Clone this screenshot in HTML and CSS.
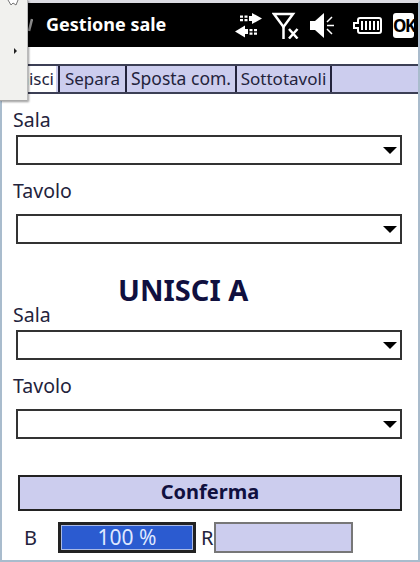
FILE: index.html
```html
<!DOCTYPE html>
<html lang="it">
<head>
  <meta charset="UTF-8">
  <meta name="viewport" content="width=device-width, initial-scale=1.0">
  <title>Gestione sale</title>
  <link rel="stylesheet" href="styles.css">
</head>
<body>

<div class="screen">
  <header class="titlebar">
    <svg class="ico-flag" width="5" height="14" viewBox="0 0 5 14">
      <path d="M4 1L1 13" stroke="#8a8a8a" stroke-width="2.5"/>
    </svg>
    <span class="title">Gestione sale</span>
    <div class="tray">
      <svg class="ico-sync" width="28" height="25" viewBox="0 0 28 25">
        <path d="M17 0l10 5.500-10 5.500V8h-3V3h3z" fill="#fff"/>
        <path d="M5 2.500h3v2.200H5zM5 6h3v2.200H5zM9.500 2.500h3v2.200h-3zM9.500 6h3v2.200h-3z" fill="#fff"/>
        <path d="M10 12.500L0 18.500l10 6v-3.500h3v-5h-3z" fill="#fff"/>
        <path d="M14.500 16h3v2.200h-3zM14.500 19.500h3v2.200h-3zM19 16h3v2.200h-3zM19 19.500h3v2.200h-3z" fill="#fff"/>
      </svg>
      <svg class="ico-signal" width="27" height="27" viewBox="0 0 27 27">
        <path d="M2 2h19L11.500 15z" fill="none" stroke="#fff" stroke-width="2.500"/>
        <path d="M11.500 14v13" stroke="#fff" stroke-width="2.500"/>
        <path d="M17 17l8.500 9.500M25.500 17l-8.500 9.500" stroke="#fff" stroke-width="2.500"/>
      </svg>
      <svg class="ico-sound" width="25" height="25" viewBox="0 0 25 25">
        <path d="M0 8h5l9-8v25l-9-8H0z" fill="#fff"/>
        <path d="M17 9l5-5M17 12.500h7M17 16l5 5" stroke="#fff" stroke-width="1.500"/>
      </svg>
      <svg class="ico-battery" width="29" height="17" viewBox="0 0 29 17">
        <path d="M7 1h19a2 2 0 0 1 2 2v11a2 2 0 0 1-2 2H7a2 2 0 0 1-2-2v-3H1V6h4V3a2 2 0 0 1 2-2z" fill="none" stroke="#fff" stroke-width="2"/>
        <path d="M9 4v9M13 4v9M17 4v9M21 4v9M25 4v9" stroke="#fff" stroke-width="2"/>
      </svg>
      <span class="ok">OK</span>
    </div>
  </header>

  <nav class="tabs">
    <span class="tab tab-active">Unisci</span>
    <span class="tab tab-separa">Separa</span>
    <span class="tab tab-sposta">Sposta com.</span>
    <span class="tab tab-sotto">Sottotavoli</span>
  </nav>

  <main class="content">
    <div class="field">
      <label class="lbl">Sala</label>
      <div class="combo"><span class="arrow"></span></div>
    </div>
    <div class="field">
      <label class="lbl">Tavolo</label>
      <div class="combo combo-low"><span class="arrow"></span></div>
    </div>

    <h2 class="heading">UNISCI A</h2>

    <div class="field field-tight">
      <label class="lbl">Sala</label>
      <div class="combo"><span class="arrow"></span></div>
    </div>
    <div class="field">
      <label class="lbl">Tavolo</label>
      <div class="combo combo-low"><span class="arrow"></span></div>
    </div>

    <button class="confirm" type="button">Conferma</button>

    <div class="status">
      <span class="status-b">B</span>
      <div class="progress">100 %</div>
      <span class="status-r">R</span>
      <div class="rbox"></div>
    </div>
  </main>
</div>

<div class="popup"><span class="popup-arrow"></span></div>
<svg class="cursor" width="12" height="6" viewBox="0 0 12 6">
  <path d="M1 0l3 5 2-2 3 2 2-5" fill="#fff" stroke="#777" stroke-width="1"/>
</svg>

</body>
</html>
```

FILE: styles.css
```css
* {
  box-sizing: border-box;
}

body {
  margin: 0;
  background-color: #fff;
  font-family: "Noto Sans", sans-serif;
  color: #23233c;
}

.screen {
  width: 420px;
  height: 562px;
  display: flex;
  flex-direction: column;
  background-color: #fff;
  border-top: 3px solid #dcdce2;
  border-left: 2px solid #a9bccd;
  border-right: 2px solid #a9bccd;
  border-bottom: 2px solid #a9bccd;
}

.titlebar {
  height: 44px;
  flex-shrink: 0;
  background-color: #000;
  color: #fff;
  display: flex;
  align-items: center;
  padding: 0 4px 0 26px;
}

.ico-flag {
  margin-right: 13px;
}

.title {
  font-weight: bold;
  font-size: 18px;
  padding-bottom: 3px;
}

.tray {
  margin-left: auto;
  display: flex;
  align-items: center;
}

.ico-sync {
  margin-right: 9px;
}

.ico-signal {
  margin-right: 11px;
}

.ico-sound {
  margin-right: 18px;
}

.ico-battery {
  margin-right: 11px;
}

.ok {
  width: 21px;
  height: 25px;
  background-color: #fff;
  color: #000;
  border-radius: 3px;
  font-weight: bold;
  font-size: 17px;
  letter-spacing: -1.5px;
  text-align: center;
  line-height: 25px;
}

.tabs {
  margin-top: 17px;
  height: 30px;
  flex-shrink: 0;
  display: flex;
  background-color: #cccdee;
  border-top: 2px solid #3c3f55;
  border-bottom: 2px solid #3c3f55;
  font-size: 17px;
}

.tab {
  text-align: center;
  line-height: 25px;
  border-right: 2px solid #23233c;
}

.tab-active {
  width: 54px;
  background-color: #fff;
  text-align: right;
  padding-right: 2px;
  border-right: none;
  margin-right: 2px;
}

.tab-separa {
  width: 69px;
  border-left: 2px solid #23233c;
}

.tab-sposta {
  width: 110px;
  font-size: 17.500px;
}

.tab-sotto {
  width: 95px;
}

.content {
  flex: 1;
  background-color: #fff;
  padding: 13px 16px 0 14px;
  display: flex;
  flex-direction: column;
}

.field {
  margin-bottom: 13px;
}

.lbl {
  display: block;
  font-size: 19.500px;
  line-height: 26px;
  margin-left: -3px;
}

.combo {
  margin-top: 2px;
  height: 30px;
  border: 2px solid #333;
  display: flex;
  align-items: center;
  justify-content: flex-end;
  padding-right: 3px;
}

.combo-low {
  margin-top: 10px;
}

.arrow {
  width: 0;
  height: 0;
  border-left: 7px solid transparent;
  border-right: 7px solid transparent;
  border-top: 7px solid #000;
}

.heading {
  margin: 18px 0 0;
  padding-left: 102px;
  font-size: 29px;
  line-height: 30px;
  font-weight: bold;
  color: #10103f;
}

.field-tight {
  margin-top: -3px;
}

.confirm {
  margin: 23px 0 0 2px;
  height: 36px;
  width: 384px;
  background-color: #cccdee;
  border: 2px solid #222;
  font-family: "Noto Sans", sans-serif;
  font-weight: bold;
  font-size: 20px;
  line-height: 28px;
  color: #10103f;
  padding: 0 0 2px;
}

.status {
  display: flex;
  align-items: center;
  margin-top: 11px;
  font-size: 20px;
}

.status-b {
  width: 42px;
  padding-left: 8px;
}

.progress {
  width: 138px;
  height: 31px;
  background-color: #2b5bd0;
  border: 3px solid #222;
  box-shadow: inset 0 0 0 1px #a9b9e6;
  color: #dfe8ff;
  font-size: 21px;
  text-align: center;
  line-height: 24px;
}

.status-r {
  margin-left: 5px;
  width: 13px;
}

.rbox {
  width: 139px;
  height: 31px;
  background-color: #cccdee;
  border: 2px solid #777;
}

/* menu aperto sopra la finestra */
.popup {
  position: absolute;
  left: 0;
  top: 0;
  width: 28px;
  height: 101px;
  background-color: #f1f1ee;
  border-right: 1px solid #bbb;
  border-bottom: 1px solid #aaa;
  box-shadow: 1px 1px 2px rgba(0, 0, 0, 0.4);
}

.popup-arrow {
  position: absolute;
  left: 14px;
  top: 48px;
  width: 0;
  height: 0;
  border-top: 3px solid transparent;
  border-bottom: 3px solid transparent;
  border-left: 3px solid #222;
}

.cursor {
  position: absolute;
  left: 7px;
  top: 0;
}
```
